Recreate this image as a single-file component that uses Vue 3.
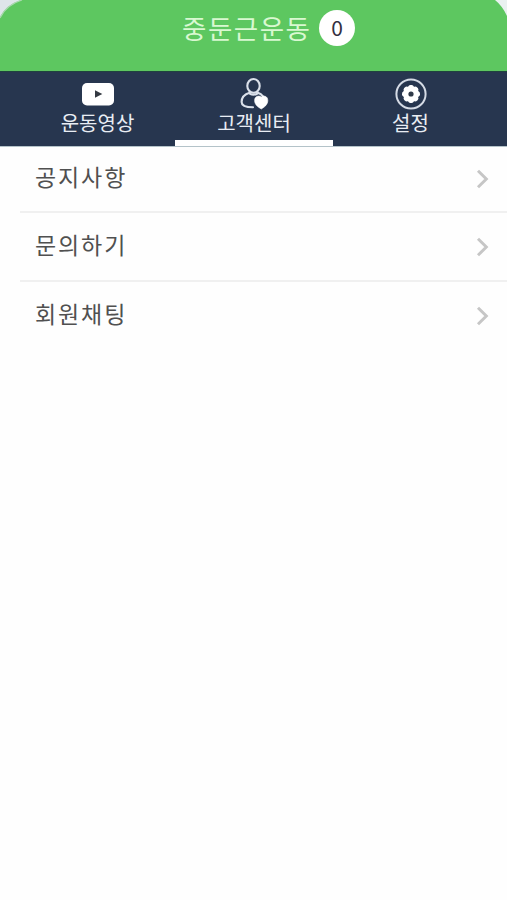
<script setup>
const rows = ['공지사항', '문의하기', '회원채팅']
</script>

<template>
  <div class="app">
    <header class="header">
      <svg class="corner left" width="24" height="20" viewBox="0 0 24 20">
        <path d="M0 0H21Q6 5 0 17Z" fill="#dfe5ea" />
        <path d="M22 0Q6 5 0 18" fill="none" stroke="#a9d9ae" stroke-width="1.2" />
      </svg>
      <svg class="corner right" width="16" height="20" viewBox="0 0 16 20">
        <path d="M4 0H16V16Q11.5 6 4 0Z" fill="#e9f1f0" />
      </svg>
      <h1 class="title">중둔근운동</h1>
      <span class="badge">0</span>
    </header>

    <nav class="tabs">
      <div class="tab">
        <svg class="icon" width="34" height="34" viewBox="0 0 34 34">
          <rect x="1" y="6" width="32" height="22.5" rx="5" fill="#fff" />
          <path d="M14 13.2L21.3 17L14 20.8Z" fill="#343942" />
        </svg>
        <span class="label">운동영상</span>
      </div>
      <div class="tab active">
        <svg class="icon" width="34" height="34" viewBox="0 0 34 34">
          <g fill="none" stroke="#dbe1ea" stroke-width="2.1" stroke-linecap="round" stroke-linejoin="round">
            <ellipse cx="16.5" cy="8.9" rx="6.2" ry="6.9" />
            <path d="M12.2 15.8C7.5 17.4 4.6 20.6 4.6 25C4.6 29.2 9 30.3 16 30.3M12.2 15.8C13.2 18.2 19.8 18.2 20.8 15.8C22.8 16.5 24.6 17.6 26 19.4" />
          </g>
          <path d="M24.3 20C26 18.2 30.8 18.8 30.8 23.4C30.8 27.6 27.5 30 24.3 32C21 30 17.6 27.6 17.6 23.4C17.6 18.8 22.6 18.2 24.3 20Z" fill="#fff" stroke="#fff" stroke-width="0.6" />
        </svg>
        <span class="label">고객센터</span>
      </div>
      <div class="tab settings">
        <svg class="icon" width="34" height="34" viewBox="0 0 34 34">
          <circle cx="17" cy="17" r="14.6" fill="none" stroke="#d5dbe5" stroke-width="2" />
          <g fill="#fff">
            <circle cx="17" cy="17" r="8" />
            <rect v-for="a in 4" :key="a" x="14.4" y="8" width="5.2" height="18" rx="2" :transform="`rotate(${a * 45} 17 17)`" />
          </g>
          <circle cx="17" cy="17" r="2.6" fill="#303a49" />
        </svg>
        <span class="label">설정</span>
      </div>
    </nav>

    <ul class="list">
      <li v-for="row in rows" :key="row" class="row">
        <span class="name">{{ row }}</span>
        <svg class="chevron" width="14" height="20" viewBox="0 0 14 20">
          <path d="M2 1.8L10.3 10L2 18.2" fill="none" stroke="#c6c6c6" stroke-width="3" />
        </svg>
      </li>
    </ul>
  </div>
</template>

<style>
body {
  margin: 0;
  background: #fefefe;
}
</style>

<style scoped>
.app {
  min-height: 900px;
  background: #fefefe;
  font-family: "Noto Sans CJK KR", sans-serif;
}
.header {
  position: relative;
  box-sizing: border-box;
  height: 71px;
  padding: 10px 0 0 182px;
  display: flex;
  align-items: flex-start;
  background: #5dc760;
}
.corner {
  position: absolute;
  top: 0;
}
.left {
  left: 0;
}
.right {
  right: 0;
}
.title {
  margin: 0;
  width: 137px;
  font-size: 26.5px;
  line-height: 35px;
  font-weight: 400;
  letter-spacing: 1.5px;
  white-space: nowrap;
  color: #d9f8d1;
}
.badge {
  width: 36px;
  height: 36px;
  border-radius: 50%;
  background: #fff;
  color: #33303f;
  font-size: 21px;
  line-height: 35px;
  text-align: center;
}
.tabs {
  box-sizing: border-box;
  height: 75px;
  padding: 0 18px 0 19px;
  display: grid;
  grid-template-columns: 156px 158px 156px;
  background: #27364f;
  border-top: 1px solid #20433f;
}
.tab {
  box-sizing: border-box;
  height: 74px;
  padding: 5px 0 0 1px;
  display: flex;
  flex-direction: column;
  align-items: center;
}
.active {
  padding-left: 0;
  border-bottom: 6px solid #fff;
}
.settings {
  padding-left: 0;
  padding-right: 1px;
}
.icon {
  display: block;
  flex: none;
}
.label {
  font-size: 20px;
  line-height: 23px;
  color: #e9edf4;
  white-space: nowrap;
}
.list {
  list-style: none;
  margin: 0;
  padding: 0 0 0 20px;
  border-top: 1px solid #b4c3c9;
}
.row {
  box-sizing: border-box;
  height: 69px;
  padding: 0 17px 0 15px;
  display: flex;
  align-items: center;
  justify-content: space-between;
  border-bottom: 2px solid #f0f0f0;
  font-size: 23px;
  line-height: 34px;
  font-weight: 400;
  letter-spacing: 1.9px;
  color: #505050;
}
.name {
  padding-bottom: 6px;
}
.row:first-child {
  height: 66px;
}
.row:last-child {
  height: 68px;
  border-bottom: 0;
}
</style>
